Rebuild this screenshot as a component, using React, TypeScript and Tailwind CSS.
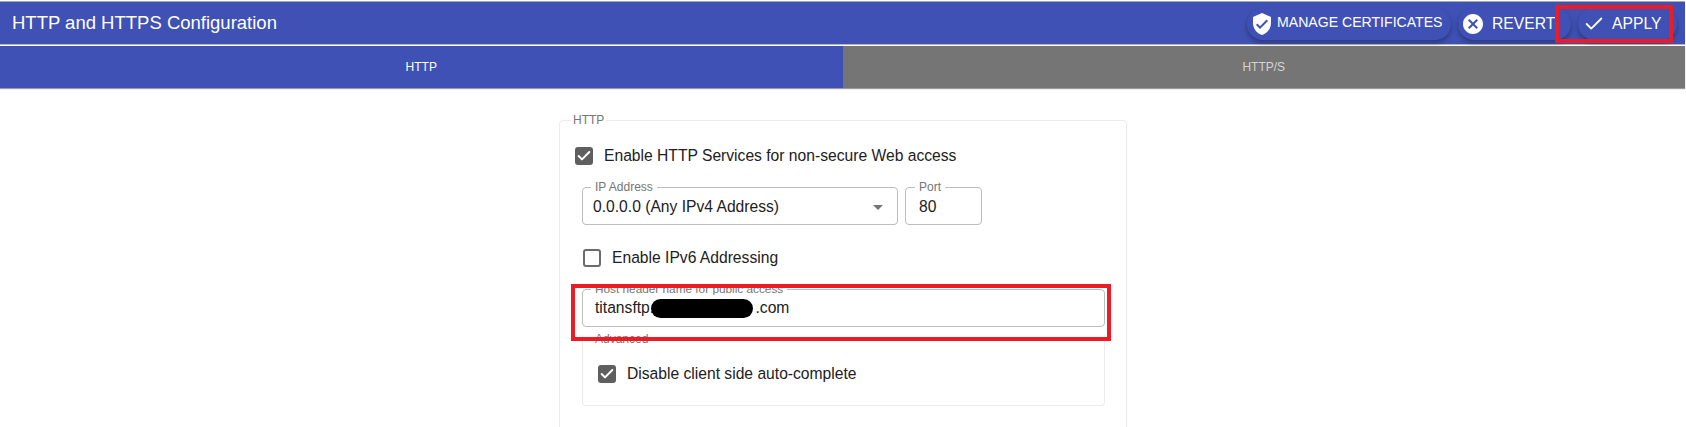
import { Check } from "lucide-react";

const PillButton = ({ icon, label, className }: { icon: React.ReactNode; label: string; className: string }) => (
  <button className={`flex h-[32px] items-center rounded-full bg-[#3f51b5] text-white shadow-[0_3px_5px_rgba(0,0,0,0.3)] ${className}`}>
    {icon}
    {label}
  </button>
);

const Box = ({ checked, className }: { checked?: boolean; className: string }) =>
  checked ? (
    <span className={`flex h-[18px] w-[18px] shrink-0 items-center justify-center rounded-[3px] bg-[#5f5f5f] ${className}`}>
      <Check size={16} strokeWidth={3} color="#fff" />
    </span>
  ) : (
    <span className={`h-[18px] w-[18px] shrink-0 rounded-[3px] border-2 border-[#6b6b6b] ${className}`} />
  );

export default function App() {
  return (
    <div className="relative h-[427px] w-[1686px] overflow-hidden bg-white font-['Liberation_Sans',Arial,sans-serif] text-[#212121]">
      {/* Title bar */}
      <div className="mr-px mt-[2px] flex h-[42px] items-center justify-between bg-[#3f51b5] pl-[12px] pr-[8px] text-white shadow-[0_-1px_0_#a8a8a8,0_1px_0_#b5b5b5]">
        <h1 className="text-[18.5px] leading-none">HTTP and HTTPS Configuration</h1>
        <div className="mt-[2px] flex items-center gap-[7px]">
          <PillButton
            className="w-[204px] pb-[2px] pl-[3px] text-[14.1px]"
            label="MANAGE CERTIFICATES"
            icon={
              <svg viewBox="0 0 24 24" className="mr-[3px] mt-[2px] h-[24px] w-[24px]" fill="#fff">
                <path d="M12 1 3 5v6c0 5.55 3.84 10.74 9 12 5.16-1.26 9-6.45 9-12V5l-9-4zm-2 16-4-4 1.41-1.41L10 14.17l6.59-6.59L18 9l-8 8z" />
              </svg>
            }
          />
          <PillButton
            className="w-[113px] pl-[3px] text-[15.7px]"
            label="REVERT"
            icon={
              <svg viewBox="0 0 24 24" className="mr-[7px] h-[24px] w-[24px]" fill="#fff">
                <path d="M12 2C6.47 2 2 6.47 2 12s4.47 10 10 10 10-4.47 10-10S17.53 2 12 2zm5 13.59L15.59 17 12 13.41 8.41 17 7 15.59 10.59 12 7 8.41 8.41 7 12 10.59 15.59 7 17 8.41 13.41 12 17 15.59z" />
              </svg>
            }
          />
          <PillButton
            className="w-[99px] pl-[5px] text-[15.7px]"
            label="APPLY"
            icon={<Check size={22} strokeWidth={2} className="mr-[7px]" />}
          />
        </div>
      </div>

      {/* Tabs */}
      <div className="mr-px mt-[2px] grid h-[42px] grid-cols-2 text-[12px] shadow-[0_1px_1px_#9a9a9a]">
        <div className="flex items-center justify-center bg-[#3f51b5] text-white">HTTP</div>
        <div className="flex items-center justify-center bg-[#757575] text-[#d4d4d4]">HTTP/S</div>
      </div>

      {/* Settings card */}
      <div className="relative ml-[559px] mt-[32px] h-[340px] w-[568px] rounded-[4px] border border-[#ececec] px-[15px]">
        <span className="absolute left-[11px] top-[-9px] bg-white px-[2px] text-[12px] leading-[16px] text-[#757575]">HTTP</span>

        <label className="mt-[26px] flex items-center text-[15.65px] leading-[18px]">
          <Box checked className="mr-[11px]" />
          Enable HTTP Services for non-secure Web access
        </label>

        <div className="ml-[7px] mt-[22px] flex gap-[7px]">
          <div className="relative flex h-[38px] w-[316px] items-center rounded-[4px] border border-[#bdbdbd] pl-[10px] pr-[14px] pt-[2px] text-[15.65px]">
            <span className="absolute left-[8px] top-[-9px] bg-white px-[4px] text-[12px] leading-[16px] text-[#757575]">IP Address</span>
            <span className="flex-1">0.0.0.0 (Any IPv4 Address)</span>
            <span className="h-0 w-0 border-x-[5px] border-t-[5px] border-x-transparent border-t-[#757575]" />
          </div>
          <div className="relative flex h-[38px] w-[77px] items-center rounded-[4px] border border-[#bdbdbd] pl-[13px] pt-[2px] text-[15.65px]">
            <span className="absolute left-[9px] top-[-9px] bg-white px-[4px] text-[12px] leading-[16px] text-[#757575]">Port</span>
            80
          </div>
        </div>

        <label className="ml-[8px] mt-[24px] flex items-center text-[15.65px] leading-[18px]">
          <Box className="mr-[11px]" />
          Enable IPv6 Addressing
        </label>

        <div className="relative ml-[7px] mt-[22px] flex h-[38px] w-[523px] items-center rounded-[4px] border border-[#bdbdbd] pl-[12px] text-[15.65px]">
          <span className="absolute left-[8px] top-[-9px] bg-white px-[4px] text-[11.8px] leading-[16px] text-[#757575]">Host header name for public access</span>
          titansftp.
          <span className="ml-[-3px] mr-[-2px] inline-block h-[19px] w-[102px] rounded-full bg-black" />
          &nbsp;.com
        </div>

        <div className="relative ml-[7px] mt-[8px] h-[71px] w-[523px] rounded-b-[4px] border border-t-0 border-[#ececec] pl-[15px] pt-[30px]">
          <span className="absolute left-[10px] top-[-4px] bg-white px-[2px] text-[12px] leading-[16px] text-[#757575]">Advanced</span>
          <label className="flex items-center text-[15.65px] leading-[18px]">
            <Box checked className="mr-[11px]" />
            Disable client side auto-complete
          </label>
        </div>
      </div>

      {/* Red annotation boxes drawn over the screenshot */}
      <div className="absolute left-[1555px] top-[5px] h-[38px] w-[118px] border-[4px] border-[#ed1c24]" />
      <div className="absolute left-[571px] top-[284px] h-[57px] w-[540px] border-[4px] border-[#ed1c24]" />
    </div>
  );
}
